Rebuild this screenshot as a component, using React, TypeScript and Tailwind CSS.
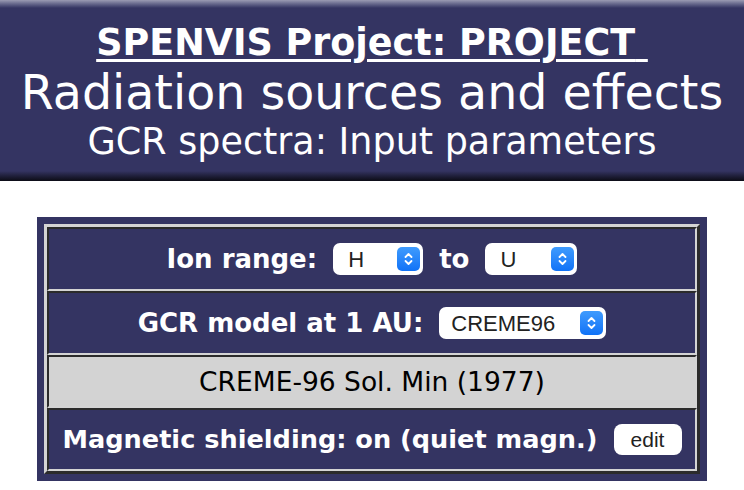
import { ReactNode } from 'react'

const Stepper = () => (
    <span className="flex h-[24px] w-[23px] items-center justify-center rounded-[5px] bg-gradient-to-b from-[#3f9bfd] to-[#0f72f7]">
        <svg width="11" height="16" viewBox="0 0 11 16" fill="none">
            <path d="M2.5 6 L5.5 3 L8.5 6" stroke="white" strokeWidth="1.8" strokeLinecap="round" strokeLinejoin="round" />
            <path d="M2.5 10 L5.5 13 L8.5 10" stroke="white" strokeWidth="1.8" strokeLinecap="round" strokeLinejoin="round" />
        </svg>
    </span>
)

const Select = ({ value, width, pl }: { value: string; width: string; pl: string }) => (
    <div className={`flex h-[32px] items-center justify-between rounded-[7px] bg-white pr-[3px] ${width} ${pl}`}>
        <span className="font-['Liberation_Sans',Arial,sans-serif] text-[22px] text-[#222]">{value}</span>
        <Stepper />
    </div>
)

const Row = ({ children, h, grey }: { children: ReactNode; h: string; grey?: boolean }) => (
    <div
        className={`flex items-center justify-center gap-[16px] border-2 border-t-[#2b2b2b] border-l-[#2b2b2b] border-b-[#d4d4d4] border-r-[#d4d4d4] ${h} ${
            grey ? 'bg-[#d3d3d3]' : 'bg-[#343462]'
        }`}
    >
        {children}
    </div>
)

export default function App() {
    return (
        <div className="min-h-[490px] bg-white font-['DejaVu_Sans',Verdana,sans-serif]">
            {/* шапка */}
            <div className="relative h-[181px] bg-[#343462] pt-[21px] text-center text-white">
                <div className="absolute inset-x-0 top-0 h-[8px] bg-gradient-to-b from-[#9b9bb3] to-[#343462]" />
                <div className="absolute inset-x-0 bottom-0 h-[10px] bg-gradient-to-b from-[#343462] to-[#0c0c16]" />
                <div className="relative text-[36.5px] font-bold leading-[43px] underline decoration-[3px] underline-offset-[4px] whitespace-pre">
                    SPENVIS Project: PROJECT{' '}
                </div>
                <div className="relative text-[47.5px] leading-[57px]">Radiation sources and effects</div>
                <div className="relative text-[36.5px] leading-[42px]">GCR spectra: Input parameters</div>
            </div>

            {/* таблица */}
            <div className="ml-[37px] mt-[36px] w-[670px] bg-[#343462] p-[7px]">
                <div className="flex flex-col border-[3px] border-t-[#d4d4d4] border-l-[#d4d4d4] border-b-[#2b2b2b] border-r-[#2b2b2b]">
                    <Row h="h-[64px]">
                        <span className="text-[26px] font-bold text-white">Ion range:</span>
                        <Select value="H" width="w-[90px]" pl="pl-[15px]" />
                        <span className="text-[26px] font-bold text-white">to</span>
                        <Select value="U" width="w-[92px]" pl="pl-[15px]" />
                    </Row>
                    <Row h="h-[64px]">
                        <span className="text-[26px] font-bold text-white">GCR model at 1 AU:</span>
                        <Select value="CREME96" width="w-[167px]" pl="pl-[12px]" />
                    </Row>
                    <Row h="h-[53px]" grey>
                        <span className="text-[26.5px] text-black">CREME-96 Sol. Min (1977)</span>
                    </Row>
                    <Row h="h-[63px]">
                        <span className="text-[25.6px] font-bold text-white">Magnetic shielding: on (quiet magn.)</span>
                        <button className="h-[31px] w-[68px] rounded-[8px] bg-white font-['Liberation_Sans',Arial,sans-serif] text-[21px] text-[#222]">
                            edit
                        </button>
                    </Row>
                </div>
            </div>
        </div>
    )
}
